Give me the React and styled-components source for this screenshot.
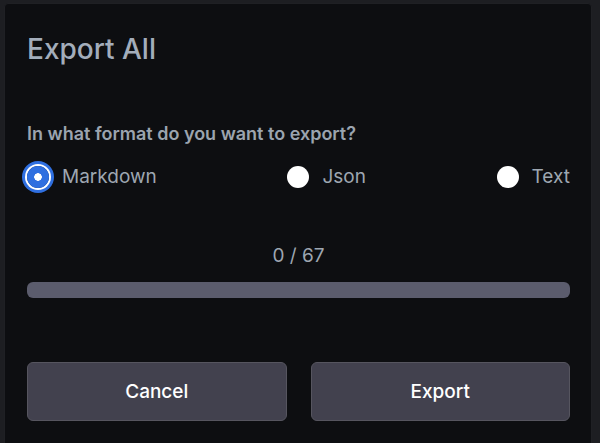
import { useState } from "react";
import styled, { createGlobalStyle } from "styled-components";

const Global = createGlobalStyle`
  html, body {
    margin: 0;
    padding: 0;
    background: #1d1e22;
    font-family: Inter, "Liberation Sans", sans-serif;
  }
`;

const Page = styled.div`
  width: 600px;
  height: 443px;
  overflow: hidden;
  padding: 3px 8px 0 4px;
  box-sizing: border-box;
`;

const Modal = styled.div`
  height: 460px;
  background: #0d0e11;
  border: 1px solid #1f2024;
  border-radius: 4px;
  padding: 29px 21px 0 22px;
  box-sizing: border-box;
  display: flex;
  flex-direction: column;
`;

const Title = styled.h2`
  margin: 0;
  font-size: 28px;
  font-weight: 500;
  color: #a3adbb;
  line-height: 32px;
`;

const Question = styled.p`
  margin: 58px 0 0;
  font-size: 18px;
  font-weight: 600;
  color: #9ba4af;
  line-height: 22px;
`;

const Options = styled.div`
  display: flex;
  justify-content: space-between;
  align-items: center;
  margin-top: 20px;
`;

const Option = styled.label`
  display: flex;
  align-items: center;
  gap: 13px;
  cursor: pointer;
  font-size: 19px;
  color: #9ea7b1;
`;

const Dot = styled.span`
  width: 22px;
  height: 22px;
  flex: none;
  border-radius: 50%;
  background: ${(p) =>
    p.checked
      ? "radial-gradient(circle, #ffffff 0 3.5px, #2f6fe0 4px)"
      : "#ffffff"};
  box-shadow: ${(p) =>
    p.checked ? "0 0 0 2px #ffffff, 0 0 0 5px #2f6fe0" : "none"};
`;

const Counter = styled.div`
  margin-top: 56px;
  text-align: center;
  font-size: 19px;
  color: #9ea6b1;
  line-height: 24px;
`;

const Bar = styled.div`
  margin-top: 14px;
  height: 16px;
  border-radius: 6px;
  background: #5b5c6d;
  overflow: hidden;
`;

const Fill = styled.div`
  height: 100%;
  background: #2f6fe0;
`;

const Buttons = styled.div`
  display: grid;
  grid-template-columns: 1fr 1fr;
  gap: 24px;
  margin-top: 64px;
`;

const Button = styled.button`
  height: 59px;
  border-radius: 6px;
  border: 1px solid #56555f;
  background: #42414e;
  color: #ffffff;
  font-family: Inter, "Liberation Sans", sans-serif;
  font-size: 19px;
  font-weight: 500;
  cursor: pointer;
`;

const formats = ["Markdown", "Json", "Text"];

export default function App() {
  const [format, setFormat] = useState("Markdown");
  const done = 0;
  const total = 67;

  return (
    <Page>
      <Global />
      <Modal>
        <Title>Export All</Title>
        <Question>In what format do you want to export?</Question>
        <Options>
          {formats.map((f) => (
            <Option key={f} onClick={() => setFormat(f)}>
              <Dot checked={f === format} />
              {f}
            </Option>
          ))}
        </Options>
        <Counter>
          {done} / {total}
        </Counter>
        <Bar>
          <Fill style={{ width: `${(done / total) * 100}%` }} />
        </Bar>
        <Buttons>
          <Button>Cancel</Button>
          <Button>Export</Button>
        </Buttons>
      </Modal>
    </Page>
  );
}
